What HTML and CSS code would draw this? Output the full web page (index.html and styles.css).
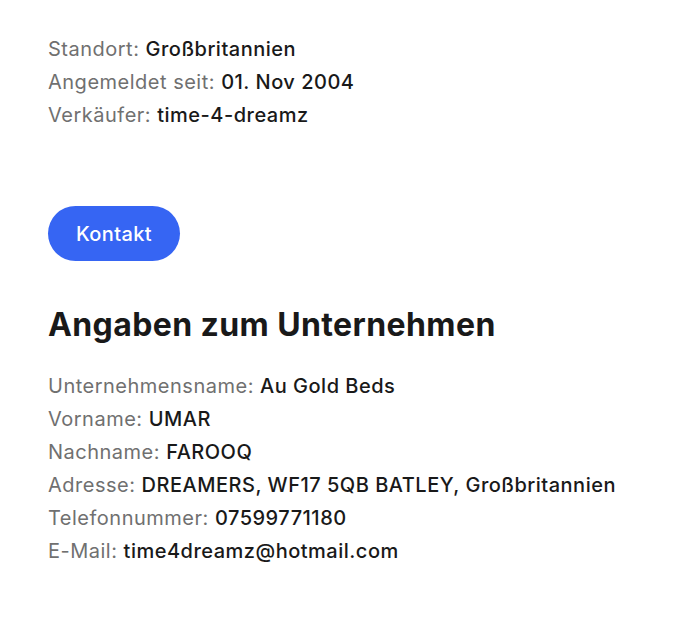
FILE: index.html
```html
<!DOCTYPE html>
<html lang="de">
<head>
<meta charset="utf-8">
<link rel="stylesheet" href="styles.css">
</head>
<body>
<main class="page">
  <section class="info">
    <div class="row"><span class="label">Standort:</span> <span class="value">Großbritannien</span></div>
    <div class="row"><span class="label">Angemeldet seit:</span> <span class="value">01. Nov 2004</span></div>
    <div class="row"><span class="label">Verkäufer:</span> <span class="value">time-4-dreamz</span></div>
  </section>
  <button class="btn">Kontakt</button>
  <h2 class="title">Angaben zum Unternehmen</h2>
  <section class="info">
    <div class="row"><span class="label">Unternehmensname:</span> <span class="value">Au Gold Beds</span></div>
    <div class="row"><span class="label">Vorname:</span> <span class="value">UMAR</span></div>
    <div class="row"><span class="label">Nachname:</span> <span class="value">FAROOQ</span></div>
    <div class="row"><span class="label">Adresse:</span> <span class="value">DREAMERS, WF17 5QB BATLEY, Großbritannien</span></div>
    <div class="row"><span class="label">Telefonnummer:</span> <span class="value">07599771180</span></div>
    <div class="row"><span class="label">E-Mail:</span> <span class="value">time4dreamz@hotmail.com</span></div>
  </section>
</main>
</body>
</html>
```
FILE: styles.css
```css
html, body {
  margin: 0;
  padding: 0;
  background: #ffffff;
}
body {
  font-family: Inter, "Open Sans", "Liberation Sans", sans-serif;
}
.page {
  padding: 33px 48px 0 48px;
  display: flex;
  flex-direction: column;
  align-items: flex-start;
}
.info {
  display: flex;
  flex-direction: column;
}
.row {
  font-size: 20px;
  line-height: 33px;
  letter-spacing: 0.5px;
  white-space: nowrap;
}
.label {
  color: #707070;
}
.value {
  color: #191919;
  font-weight: 500;
}
.btn {
  margin-top: 74px;
  width: 132px;
  height: 55px;
  border: none;
  border-radius: 28px;
  background: #3665f3;
  color: #ffffff;
  font-family: inherit;
  font-size: 20px;
  font-weight: 500;
  letter-spacing: 0.4px;
  padding: 0;
}
.title {
  margin: 44px 0 25px 0;
  font-size: 32px;
  line-height: 40px;
  letter-spacing: 0.4px;
  font-weight: 700;
  color: #191919;
}
```
